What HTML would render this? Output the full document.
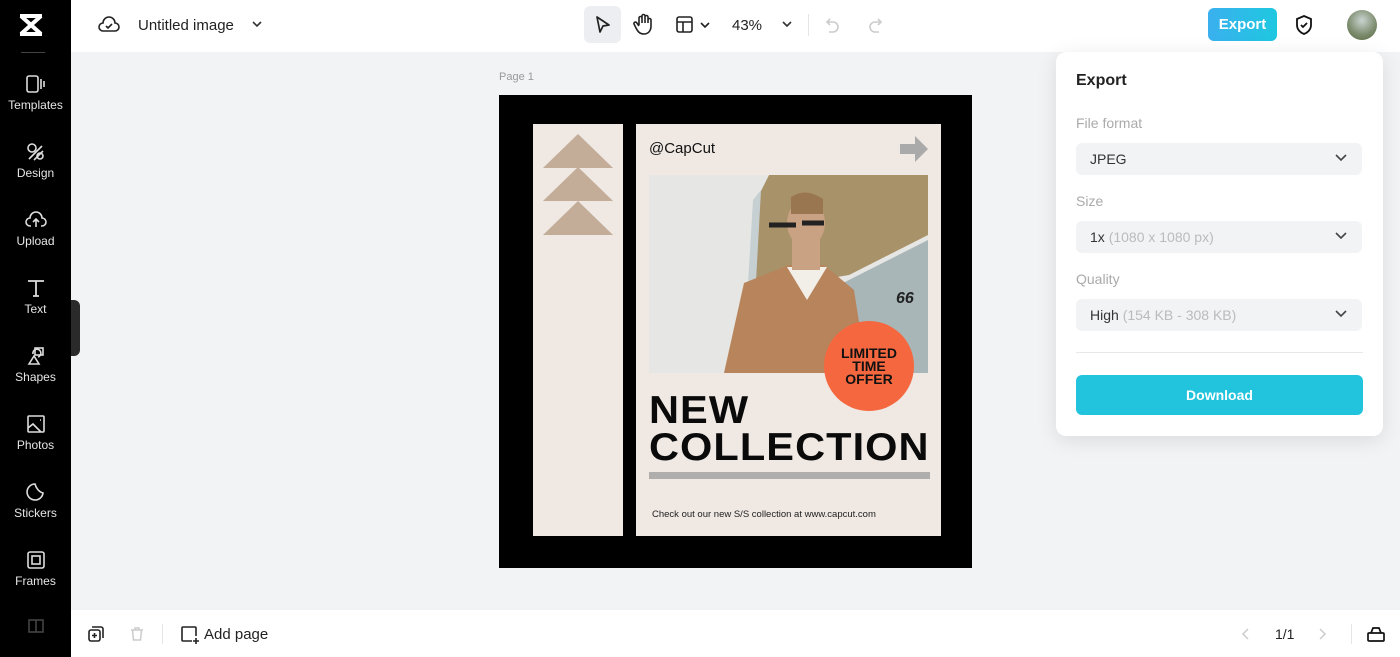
<!DOCTYPE html>
<html><head><meta charset="utf-8"><style>
*{box-sizing:border-box;margin:0;padding:0}
body{width:1400px;height:657px;overflow:hidden;font-family:"Liberation Sans",sans-serif;background:#f2f3f5;position:relative}
.abs{position:absolute}
.side{left:0;top:0;width:71px;height:657px;background:#000}
.si{position:absolute;left:0;width:71px;text-align:center;color:#e6e6e6;font-size:12px}
.si svg{display:block;margin:0 auto 4px}
.top{left:71px;top:0;width:1329px;height:52px;background:#fff}
.bot{left:71px;top:610px;width:1329px;height:47px;background:#fff}
.dd{position:absolute;left:1076px;width:286px;height:32px;background:#f2f3f5;border-radius:6px;font-size:14px;color:#333;padding:8px 14px}
.dd svg{position:absolute;right:14px;top:10px}
.lbl{position:absolute;left:1076px;font-size:14px;color:#aaa}
</style></head><body>
<div class="abs side">
 <svg class="abs" style="left:17px;top:13px" width="28" height="24" viewBox="0 0 28 24"><path d="M3 3 L25 3 M3 21 L25 21 M4 3 L24 21 M24 3 L4 21" stroke="#fff" stroke-width="4" fill="none"/></svg>
 <div class="abs" style="left:21px;top:52px;width:24px;height:1px;background:#444"></div>
 <div class="si" style="top:74px"><svg width="22" height="20" viewBox="0 0 22 20" fill="none" stroke="#ddd" stroke-width="1.6"><rect x="2" y="2" width="11" height="16" rx="2"/><path d="M16 5v10M19 7v6"/></svg>Templates</div>
 <div class="si" style="top:142px"><svg width="22" height="20" viewBox="0 0 22 20" fill="none" stroke="#ddd" stroke-width="1.6"><circle cx="7" cy="6" r="4"/><path d="M4 17l13-13M9 18l9-9"/><circle cx="15" cy="14" r="3"/></svg>Design</div>
 <div class="si" style="top:210px"><svg width="22" height="20" viewBox="0 0 22 20" fill="none" stroke="#ddd" stroke-width="1.6"><path d="M6 16H5a4 4 0 010-8 6 6 0 0112 0 4 4 0 010 8h-1M11 17V9M8 12l3-3 3 3"/></svg>Upload</div>
 <div class="si" style="top:278px"><svg width="22" height="20" viewBox="0 0 22 20" fill="none" stroke="#ddd" stroke-width="1.8"><path d="M3 3h16M11 3v15M8 18h6"/></svg>Text</div>
 <div class="si" style="top:346px"><svg width="22" height="20" viewBox="0 0 22 20" fill="none" stroke="#ddd" stroke-width="1.6"><path d="M8 8a4 4 0 115 3M4 18l5-8 5 8z"/><rect x="10" y="2" width="8" height="7"/></svg>Shapes</div>
 <div class="si" style="top:414px"><svg width="22" height="20" viewBox="0 0 22 20" fill="none" stroke="#ddd" stroke-width="1.6"><rect x="3" y="2" width="16" height="16" rx="1"/><path d="M3 14l5-4 8 8M15 6h1"/></svg>Photos</div>
 <div class="si" style="top:482px"><svg width="22" height="20" viewBox="0 0 22 20" fill="none" stroke="#ddd" stroke-width="1.6"><path d="M18 11A8 8 0 1110 2c1 4 4 8 8 9z"/></svg>Stickers</div>
 <div class="si" style="top:550px"><svg width="22" height="20" viewBox="0 0 22 20" fill="none" stroke="#ddd" stroke-width="1.6"><rect x="3" y="2" width="16" height="16" rx="2"/><rect x="7" y="6" width="8" height="8"/></svg>Frames</div>
 <div class="si" style="top:618px;opacity:.3"><svg width="22" height="16" viewBox="0 0 22 16" fill="none" stroke="#ddd" stroke-width="1.6"><rect x="4" y="2" width="14" height="12"/><path d="M11 2v12"/></svg></div>
</div>
<div class="abs" style="left:71px;top:300px;width:9px;height:56px;background:#2a2a2a;border-radius:0 6px 6px 0"></div>

<div class="abs top"></div>
<svg class="abs" style="left:98px;top:15px" width="22" height="20" viewBox="0 0 22 20" fill="none" stroke="#222" stroke-width="1.6"><path d="M6 16H5a4 4 0 010-8 6 6 0 0112 0 4 4 0 010 8H6zM8 11l2 2 4-4"/></svg>
<div class="abs" style="left:138px;top:17px;font-size:15px;color:#222">Untitled image</div>
<svg class="abs" style="left:251px;top:19px" width="12" height="10" viewBox="0 0 12 10"><path d="M2 3l4 4 4-4" stroke="#333" stroke-width="1.6" fill="none"/></svg>
<div class="abs" style="left:584px;top:6px;width:37px;height:37px;background:#eceef1;border-radius:6px"></div>
<svg class="abs" style="left:594px;top:15px" width="18" height="20" viewBox="0 0 18 20"><path d="M3 2l12 8-6 1-3 6z" stroke="#222" stroke-width="1.7" fill="none" stroke-linejoin="round"/></svg>
<svg class="abs" style="left:633px;top:13px" width="20" height="22" viewBox="0 0 20 22" fill="none" stroke="#222" stroke-width="1.6"><path d="M6 12V5a1.5 1.5 0 013 0v5V3a1.5 1.5 0 013 0v7V4a1.5 1.5 0 013 0v6-3a1.5 1.5 0 013 0v6c0 5-3 8-7 8s-6-2-8-6l-2-4a1.5 1.5 0 012.5-1.5L6 13"/></svg>
<svg class="abs" style="left:675px;top:15px" width="38" height="20" viewBox="0 0 38 20" fill="none" stroke="#222" stroke-width="1.6"><rect x="2" y="2" width="15" height="15" rx="2"/><path d="M2 7h15M8 7v10M26 8l4 4 4-4"/></svg>
<div class="abs" style="left:732px;top:17px;font-size:15px;color:#222">43%</div>
<svg class="abs" style="left:781px;top:19px" width="12" height="10" viewBox="0 0 12 10"><path d="M2 3l4 4 4-4" stroke="#333" stroke-width="1.6" fill="none"/></svg>
<div class="abs" style="left:808px;top:14px;width:1px;height:22px;background:#e5e5e5"></div>
<svg class="abs" style="left:824px;top:15px" width="60" height="20" viewBox="0 0 60 20" fill="none" stroke="#ccc" stroke-width="1.6"><path d="M6 4L3 7l3 3M3 7h6a5 5 0 010 10H5M54 4l3 3-3 3M57 7h-6a5 5 0 000 10h4"/></svg>
<div class="abs" style="left:1208px;top:8px;width:69px;height:33px;border-radius:6px;background:linear-gradient(90deg,#3ab0ee,#1ec8e0);color:#fff;font-size:15px;font-weight:bold;text-align:center;line-height:33px">Export</div>
<svg class="abs" style="left:1294px;top:14px" width="20" height="22" viewBox="0 0 20 22" fill="none" stroke="#111" stroke-width="1.8"><path d="M10 2l7 3v6c0 5-4 8-7 9-3-1-7-4-7-9V5z"/><path d="M7 11l2 2 4-4"/></svg>
<div class="abs" style="left:1347px;top:10px;width:30px;height:30px;border-radius:50%;background:radial-gradient(circle at 50% 35%,#c9d3cf,#7a8a6b 60%,#5b6a45)"></div>

<!-- canvas -->
<div class="abs" style="left:499px;top:71px;font-size:11px;color:#999">Page 1</div>
<div class="abs" style="left:499px;top:95px;width:473px;height:473px;background:#000"></div>
<div class="abs" style="left:533px;top:124px;width:90px;height:412px;background:#efe8e3"></div>
<svg class="abs" style="left:540px;top:133px" width="76" height="104" viewBox="0 0 76 104" fill="#c3ac98"><path d="M38 1L73 35H3zM38 34L73 68H3zM38 68L73 102H3z"/></svg>
<div class="abs" style="left:636px;top:124px;width:305px;height:412px;background:#efe8e3"></div>
<div class="abs" style="left:649px;top:140px;font-size:15px;color:#111">@CapCut</div>
<svg class="abs" style="left:899px;top:135px" width="30" height="28" viewBox="0 0 30 28" fill="#aaa"><path d="M1 9h15V1l13 13-13 13v-8H1z"/></svg>
<svg class="abs" style="left:649px;top:175px" width="279" height="198" viewBox="0 0 279 198">
 <rect width="279" height="198" fill="#e6e7e4"/>
 <polygon points="110,20 120,0 279,0 279,60 200,100 140,110 105,125" fill="#a8926a"/>
 <polygon points="104,25 112,15 106,125 98,125" fill="#c6d0d3"/>
 <polygon points="190,110 279,65 279,198 195,198" fill="#a8b6b8"/>
 <polygon points="75,198 95,108 140,90 175,90 205,115 218,198" fill="#b8845c"/>
 <polygon points="138,92 178,92 158,125" fill="#f2eee8"/>
 <rect x="143" y="60" width="28" height="35" fill="#c9a283"/>
 <ellipse cx="157" cy="48" rx="19" ry="24" fill="#c9a283"/>
 <path d="M142 22 q15 -10 32 2 v15 h-32z" fill="#9a7650"/>
 <path d="M120 50h27M153 48h22" stroke="#222" stroke-width="5"/>
 <text x="247" y="128" font-size="16" font-weight="bold" font-style="italic" fill="#222" font-family="Liberation Sans">66</text>
</svg>
<div class="abs" style="left:824px;top:321px;width:90px;height:90px;border-radius:50%;background:#f5673f"></div>
<div class="abs" style="left:824px;top:347px;width:90px;text-align:center;font-size:14px;font-weight:bold;line-height:13px;color:#111">LIMITED<br>TIME<br>OFFER</div>
<div class="abs" style="left:649px;top:392px;font-size:39px;font-weight:900;line-height:37px;color:#0a0a0a;letter-spacing:1px;transform:scaleX(1.065);transform-origin:left">NEW<br>COLLECTION</div>
<div class="abs" style="left:649px;top:472px;width:281px;height:7px;background:#b0aeac"></div>
<div class="abs" style="left:652px;top:509px;font-size:9.5px;color:#222">Check out our new S/S collection at www.capcut.com</div>

<!-- export panel -->
<div class="abs" style="left:1056px;top:52px;width:327px;height:384px;background:#fff;border-radius:10px;box-shadow:0 4px 20px rgba(0,0,0,.1)"></div>
<div class="abs" style="left:1076px;top:72px;font-size:16px;font-weight:bold;color:#222">Export</div>
<div class="lbl" style="top:115px">File format</div>
<div class="dd" style="top:143px">JPEG<svg width="14" height="10" viewBox="0 0 14 10"><path d="M2 2l5 5 5-5" stroke="#444" stroke-width="1.6" fill="none"/></svg></div>
<div class="lbl" style="top:193px">Size</div>
<div class="dd" style="top:221px">1x <span style="color:#bbb">(1080 x 1080 px)</span><svg width="14" height="10" viewBox="0 0 14 10"><path d="M2 2l5 5 5-5" stroke="#444" stroke-width="1.6" fill="none"/></svg></div>
<div class="lbl" style="top:271px">Quality</div>
<div class="dd" style="top:299px">High <span style="color:#bbb">(154 KB - 308 KB)</span><svg width="14" height="10" viewBox="0 0 14 10"><path d="M2 2l5 5 5-5" stroke="#444" stroke-width="1.6" fill="none"/></svg></div>
<div class="abs" style="left:1076px;top:352px;width:287px;height:1px;background:#e8e8e8"></div>
<div class="abs" style="left:1076px;top:375px;width:287px;height:40px;background:#22c3dc;border-radius:6px;color:#fff;font-size:14px;font-weight:bold;text-align:center;line-height:40px">Download</div>

<!-- bottom -->
<div class="abs bot"></div>
<svg class="abs" style="left:87px;top:625px" width="18" height="18" viewBox="0 0 18 18" fill="none" stroke="#222" stroke-width="1.6"><rect x="2" y="5" width="11" height="11" rx="2"/><path d="M5 2h9a2 2 0 012 2v9M7.5 8v5M5 10.5h5"/></svg>
<svg class="abs" style="left:129px;top:626px" width="16" height="16" viewBox="0 0 16 16" fill="none" stroke="#ccc" stroke-width="1.5"><path d="M2 4h12M6 4V2h4v2M3.5 4l1 10h7l1-10"/></svg>
<div class="abs" style="left:162px;top:624px;width:1px;height:20px;background:#e5e5e5"></div>
<svg class="abs" style="left:180px;top:625px" width="20" height="20" viewBox="0 0 20 20" fill="none" stroke="#222" stroke-width="1.6"><path d="M12 16H3a1 1 0 01-1-1V3a1 1 0 011-1h12a1 1 0 011 1v8M16 13v6M13 16h6"/></svg>
<div class="abs" style="left:204px;top:626px;font-size:15px;color:#222">Add page</div>
<svg class="abs" style="left:1240px;top:627px" width="12" height="14" viewBox="0 0 12 14"><path d="M8 2L3 7l5 5" stroke="#ccc" stroke-width="1.5" fill="none"/></svg>
<div class="abs" style="left:1275px;top:626px;font-size:14px;color:#222">1/1</div>
<svg class="abs" style="left:1316px;top:627px" width="12" height="14" viewBox="0 0 12 14"><path d="M4 2l5 5-5 5" stroke="#ccc" stroke-width="1.5" fill="none"/></svg>
<div class="abs" style="left:1351px;top:624px;width:1px;height:20px;background:#e5e5e5"></div>
<svg class="abs" style="left:1366px;top:625px" width="20" height="18" viewBox="0 0 20 18" fill="none" stroke="#111" stroke-width="1.7"><rect x="2" y="8" width="16" height="8" rx="1"/><path d="M5 8l2-5h6l2 5"/></svg>
</body></html>
